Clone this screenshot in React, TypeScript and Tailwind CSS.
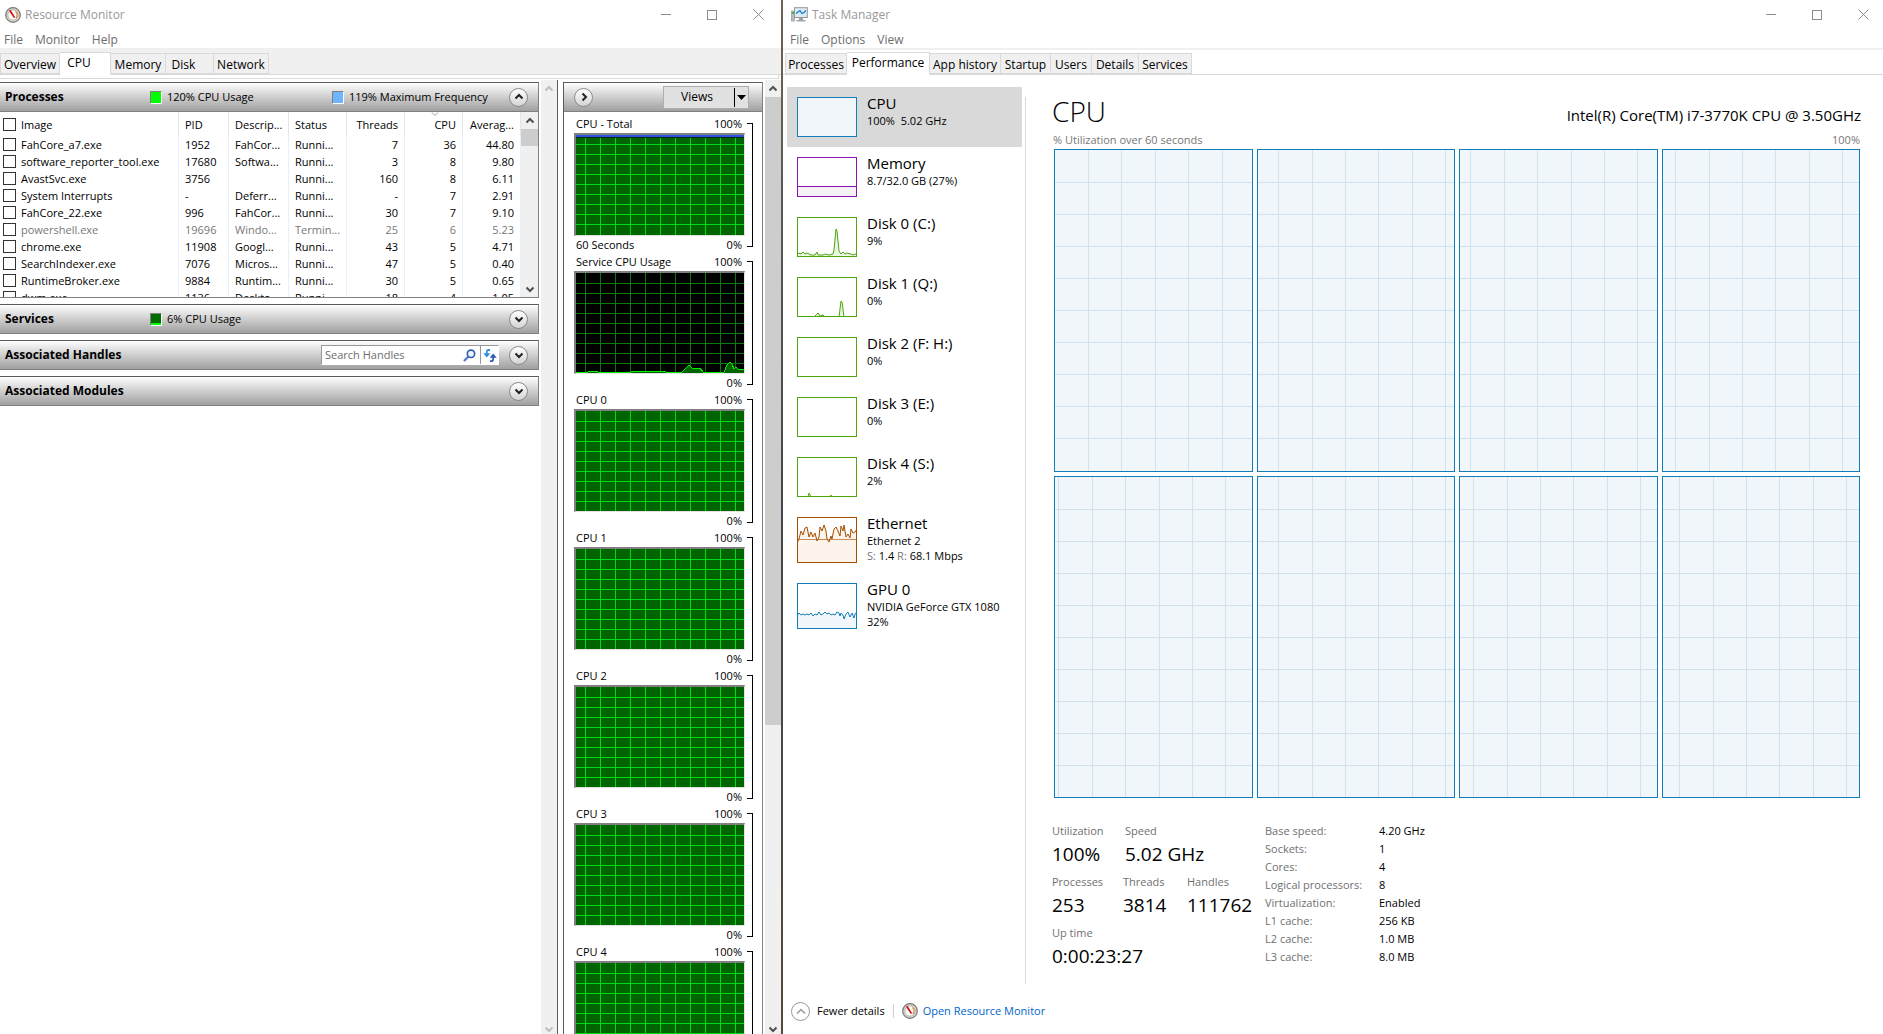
import { useState, type ReactNode } from 'react';
import clsx from 'clsx';

const PROCESSES = [
  { image: 'FahCore_a7.exe', pid: '1952', description: 'FahCor...', status: 'Runni...', threads: '7', cpu: '36', average: '44.80' },
  { image: 'software_reporter_tool.exe', pid: '17680', description: 'Softwa...', status: 'Runni...', threads: '3', cpu: '8', average: '9.80' },
  { image: 'AvastSvc.exe', pid: '3756', description: '', status: 'Runni...', threads: '160', cpu: '8', average: '6.11' },
  { image: 'System Interrupts', pid: '-', description: 'Deferr...', status: 'Runni...', threads: '-', cpu: '7', average: '2.91' },
  { image: 'FahCore_22.exe', pid: '996', description: 'FahCor...', status: 'Runni...', threads: '30', cpu: '7', average: '9.10' },
  { image: 'powershell.exe', pid: '19696', description: 'Windo...', status: 'Termin...', threads: '25', cpu: '6', average: '5.23', terminated: true },
  { image: 'chrome.exe', pid: '11908', description: 'Googl...', status: 'Runni...', threads: '43', cpu: '5', average: '4.71' },
  { image: 'SearchIndexer.exe', pid: '7076', description: 'Micros...', status: 'Runni...', threads: '47', cpu: '5', average: '0.40' },
  { image: 'RuntimeBroker.exe', pid: '9884', description: 'Runtim...', status: 'Runni...', threads: '30', cpu: '5', average: '0.65' },
  { image: 'dwm.exe', pid: '1136', description: 'Deskto...', status: 'Runni...', threads: '18', cpu: '4', average: '1.05' },
];

const GRAPHS = [
  { title: 'CPU - Total', kind: 'total', footer: '60 Seconds' },
  { title: 'Service CPU Usage', kind: 'service', footer: '' },
  { title: 'CPU 0', kind: 'core', footer: '' },
  { title: 'CPU 1', kind: 'core', footer: '' },
  { title: 'CPU 2', kind: 'core', footer: '' },
  { title: 'CPU 3', kind: 'core', footer: '' },
  { title: 'CPU 4', kind: 'core', footer: '' },
];

const SERVICE_LINE =
  '0,100 6,100 12,100 18,99 22,100 30,100 38,100 50,100 55,100 61,99 67,100 76,99 83,99 90,100 106,100 110,96 113,93 116,96 124,96 127,100 148,100 151,93 154,90 156,92 158,97 160,95 162,97 168,97';

const DEVICES = [
  { name: 'CPU', lines: ['100%  5.02 GHz'], color: '#117dbb', fill: '#f1f6fa', height: 40, points: '0,0 60,0' },
  { name: 'Memory', lines: ['8.7/32.0 GB (27%)'], color: '#8b12ae', fill: '#f4f2f4', height: 40, points: '0,29.5 60,29.5' },
  {
    name: 'Disk 0 (C:)',
    lines: ['9%'],
    color: '#4da60c',
    fill: '#eaf5e3',
    height: 40,
    points: '0,38 2,36 4,37 6,35 8,37 10,36 12,37 14,38 18,38 20,35 21,38 26,38 28,37 32,38 36,37 37,33 39,12 40,14 42,34 44,37 46,35 48,37 50,36 54,37 56,38 58,37 60,38',
  },
  {
    name: 'Disk 1 (Q:)',
    lines: ['0%'],
    color: '#4da60c',
    fill: '#eaf5e3',
    height: 40,
    points: '0,40 17,40 19,38 21,36 23,39 26,38 28,40 42,40 44,24 45,25 47,40 60,40',
  },
  { name: 'Disk 2 (F: H:)', lines: ['0%'], color: '#4da60c', fill: '#ffffff', height: 40, points: '' },
  { name: 'Disk 3 (E:)', lines: ['0%'], color: '#4da60c', fill: '#ffffff', height: 40, points: '' },
  { name: 'Disk 4 (S:)', lines: ['2%'], color: '#4da60c', fill: '#eaf5e3', height: 40, points: '0,40 11,40 12,36 14,40 33,40 34,38 35,40 60,40' },
  {
    name: 'Ethernet',
    lines: ['Ethernet 2'],
    color: '#a74f01',
    fill: '#fcf3eb',
    height: 46,
    baseline: 22,
    points:
      '0,26 2,22 4,14 6,18 8,11 10,10 12,20 14,15 16,20 18,16 20,24 22,20 23,10 25,14 27,8 29,14 30,22 32,25 34,19 35,22 37,12 39,10 41,14 43,19 44,9 46,14 47,8 49,20 51,17 53,21 54,12 56,16 58,15 60,12',
  },
  {
    name: 'GPU 0',
    lines: ['NVIDIA GeForce GTX 1080', '32%'],
    color: '#117dbb',
    fill: '#f1f6fa',
    height: 46,
    points:
      '0,33 2,30 4,32 6,31 8,32 10,31 12,32 14,30 16,33 18,31 20,32 22,29 24,32 26,31 28,29 30,31 32,30 34,32 36,31 38,32 40,29 42,30 43,33 44,30 46,32 47,36 49,31 51,29 53,34 55,30 57,35 58,31 60,29',
  },
];

// first vertical grid line of every logical processor, in percent of its width
const CORE_GRAPHS = [17, 10.5, 5.5, 6.5, 2, 10.5, 7, 8.5];

const DETAILS = [
  ['Base speed:', '4.20 GHz'],
  ['Sockets:', '1'],
  ['Cores:', '4'],
  ['Logical processors:', '8'],
  ['Virtualization:', 'Enabled'],
  ['L1 cache:', '256 KB'],
  ['L2 cache:', '1.0 MB'],
  ['L3 cache:', '8.0 MB'],
];

function MonitorIcon() {
  return (
    <svg width="16" height="16" viewBox="0 0 16 16" className="shrink-0">
      <circle cx="8" cy="8" r="7.3" fill="#d8d8d4" stroke="#77766f" strokeWidth="1.2" />
      <circle cx="8" cy="8" r="5.2" fill="#fbfbf8" stroke="#aaa89f" strokeWidth="0.8" />
      <path d="M10.5 4.5a4.4 4.4 0 0 1 .3 6.5" fill="none" stroke="#e08a4a" strokeWidth="1.3" />
      <path d="M3.8 3.5 5.8 3l4.400 7.300-1.400.8z" fill="#d01818" />
    </svg>
  );
}

function TaskIcon() {
  return (
    <svg width="17" height="15" viewBox="0 0 17 15" className="shrink-0">
      <rect x="0.5" y="4" width="3" height="10" fill="#b8bcc0" stroke="#8b8f93" strokeWidth="0.6" />
      <rect x="1" y="5" width="2" height="2" fill="#3cc13c" />
      <rect x="3.5" y="0.7" width="12.8" height="9.8" fill="#e8eaec" stroke="#8e969e" />
      <rect x="5" y="2" width="10" height="7" fill="#d5edfb" />
      <path d="M5 6.5 7 5l2-1.500 2 3L13 5.500l2-2" fill="none" stroke="#1a74b8" strokeWidth="1.2" />
      <path d="M8 11h4v2H8zM5.500 13h9v1.500h-9z" fill="#a0a4a8" />
    </svg>
  );
}

function Chevron({ direction, className }: { direction: 'up' | 'down' | 'right'; className?: string }) {
  const paths = { up: 'M1.500 6.500 5 3l3.500 3.500', down: 'M1.500 3.500 5 7l3.500-3.500', right: 'M3.500 1.500 7 5 3.500 8.500' };
  return (
    <svg width="10" height="10" viewBox="0 0 10 10" className={clsx('shrink-0', className)}>
      <path d={paths[direction]} fill="none" stroke="currentColor" strokeWidth="2" />
    </svg>
  );
}

function RoundButton({ direction, label, onClick }: { direction: 'up' | 'down' | 'right'; label: string; onClick?: () => void }) {
  return (
    <button
      type="button"
      aria-label={label}
      onClick={onClick}
      className="flex size-[19px] shrink-0 items-center justify-center rounded-full border border-[#8a8a8a] bg-linear-to-b from-white to-[#d4d4d4] text-[#222]"
    >
      <Chevron direction={direction} />
    </button>
  );
}

function TitleBar({ icon, title, className }: { icon: ReactNode; title: string; className?: string }) {
  return (
    <div className={clsx('flex h-[29px] shrink-0 items-center', className)}>
      {icon}
      <h1 className="ml-1 flex-1 text-xs text-[#999]">{title}</h1>
      <div className="flex h-full text-[#8c8c8c]">
        <button type="button" aria-label="Minimize" className="flex w-[46px] items-center justify-center">
          <svg width="11" height="11" shapeRendering="crispEdges">
            <path d="M0 5.500h10" stroke="currentColor" />
          </svg>
        </button>
        <button type="button" aria-label="Maximize" className="flex w-[46px] items-center justify-center">
          <svg width="10" height="10" shapeRendering="crispEdges">
            <rect x="0.5" y="0.5" width="9" height="9" fill="none" stroke="currentColor" />
          </svg>
        </button>
        <button type="button" aria-label="Close" className="flex w-[46px] items-center justify-center">
          <svg width="11" height="11">
            <path d="M0.500 0.500l10 10M10.500 0.500l-10 10" stroke="currentColor" />
          </svg>
        </button>
      </div>
    </div>
  );
}

function Menu({ items, className }: { items: string[]; className?: string }) {
  return (
    <nav className={clsx('flex h-[19px] shrink-0 items-center gap-3 pt-[2px] text-xs text-[#6d6d6d]', className)}>
      {items.map((item) => (
        <button key={item} type="button">
          {item}
        </button>
      ))}
    </nav>
  );
}

function Tab({ label, width, active }: { label: string; width: string; active?: boolean }) {
  return (
    <button
      type="button"
      role="tab"
      aria-selected={!!active}
      className={clsx(
        'shrink-0 border border-l-0 border-[#d9d9d9] text-xs whitespace-nowrap first:border-l',
        width,
        active ? '-mb-px h-[23px] border-b-white bg-white pb-[2px]' : 'h-[21px] bg-[#f0f0f0] pt-[2px]'
      )}
    >
      {label}
    </button>
  );
}

function ScrollBar({ thumb, muted, className }: { thumb?: string; muted?: boolean; className?: string }) {
  return (
    <div className={clsx('flex shrink-0 flex-col items-center bg-[#f0f0f0]', muted ? 'text-[#bfbfbf]' : 'text-[#505050]', className)}>
      <button type="button" aria-label="Scroll up" className="flex h-[17px] w-full items-center justify-center">
        <Chevron direction="up" />
      </button>
      <div className="flex min-h-0 w-full flex-1 flex-col">{thumb && <div className={clsx('w-full bg-[#cdcdcd]', thumb)} />}</div>
      <button type="button" aria-label="Scroll down" className="flex h-[17px] w-full items-center justify-center">
        <Chevron direction="down" />
      </button>
    </div>
  );
}

const HEADER = 'flex h-[30px] items-center border-y border-r border-t-[#5b5b5b] border-r-[#808080] border-b-[#808080] bg-linear-to-b from-white to-[#a0a0a0]';

function Section({ title, open, info, onToggle, children }: { title: string; open?: boolean; info?: ReactNode; onToggle?: () => void; children?: ReactNode }) {
  return (
    <section className="mb-[6px]">
      <header className={clsx(HEADER, 'pr-[10px] pl-[5px]')}>
        <h2 className="w-[145px] text-xs font-bold whitespace-nowrap">{title}</h2>
        <div className="flex flex-1 items-center">{info}</div>
        <RoundButton direction={open ? 'up' : 'down'} label={`Toggle ${title}`} onClick={onToggle} />
      </header>
      {children}
    </section>
  );
}

function Usage({ swatch, width, children }: { swatch: string; width: string; children: string }) {
  return (
    <span className={clsx('flex items-center gap-[5px] text-[11px] whitespace-nowrap', width)}>
      <span className={clsx('h-[13px] w-3 border border-[#808080] border-r-white border-b-white', swatch)} />
      {children}
    </span>
  );
}

function CheckBox({ label }: { label: string }) {
  return (
    <input
      type="checkbox"
      aria-label={label}
      className="block size-[13px] shrink-0 appearance-none border border-[#333] bg-white checked:bg-[#333]"
    />
  );
}

function ProcessTable() {
  const head = 'relative border-r border-[#e5e5e5] p-0 px-[6px] font-normal';
  const cell = 'border-r border-[#e6f1fb] p-0 px-[6px]';
  return (
    <div className="flex h-[186px] overflow-hidden border-r border-b border-[#808080]">
      <div className="min-w-0 flex-1 overflow-hidden">
        <table className="w-full table-fixed border-collapse text-[11px] leading-[17px] whitespace-nowrap">
          <colgroup>
            <col />
            <col className="w-[50px]" />
            <col className="w-[60px]" />
            <col className="w-[58px]" />
            <col className="w-[58px]" />
            <col className="w-[58px]" />
            <col className="w-[58px]" />
          </colgroup>
          <thead>
            <tr className="h-[24px] text-left">
              <th className="border-r border-[#e5e5e5] p-0 font-normal">
                <div className="flex items-center gap-[5px] pl-[3px]">
                  <CheckBox label="Select all" />
                  Image
                </div>
              </th>
              <th className={head}>PID</th>
              <th className={head}>Descrip...</th>
              <th className={head}>Status</th>
              <th className={clsx(head, 'text-right')}>Threads</th>
              <th className={clsx(head, 'text-right')}>
                <svg width="8" height="5" className="absolute top-0 left-[26px]">
                  <path d="M1 0.500 4 3.500 7 0.500" fill="none" stroke="#9a9a9a" />
                </svg>
                CPU
              </th>
              <th className={clsx(head, 'text-right')}>Averag...</th>
            </tr>
          </thead>
          <tbody>
            {PROCESSES.map((process) => (
              <tr key={process.pid} className={clsx('h-[17px]', process.terminated && 'text-[#777]')}>
                <td className="border-r border-[#e6f1fb] p-0">
                  <div className="flex items-center gap-[5px] pl-[3px]">
                    <CheckBox label={process.image} />
                    {process.image}
                  </div>
                </td>
                <td className={cell}>{process.pid}</td>
                <td className={cell}>{process.description}</td>
                <td className={cell}>{process.status}</td>
                <td className={clsx(cell, 'text-right')}>{process.threads}</td>
                <td className={clsx(cell, 'text-right')}>{process.cpu}</td>
                <td className={clsx(cell, 'text-right')}>{process.average}</td>
              </tr>
            ))}
          </tbody>
        </table>
      </div>
      <ScrollBar thumb="h-[17px]" className="w-[17px]" />
    </div>
  );
}

function HandleSearch() {
  const [query, setQuery] = useState('');
  return (
    <div className="mr-[10px] ml-auto flex h-5 w-[178px] items-center border border-[#999] border-r-white border-b-white bg-white">
      <input
        type="text"
        aria-label="Search Handles"
        placeholder="Search Handles"
        value={query}
        onChange={(e) => setQuery(e.target.value)}
        className="w-0 flex-1 pl-[3px] text-[11px] outline-none placeholder:text-[#6d6d6d]"
      />
      <button type="button" aria-label="Search" className="mr-1">
        <svg width="13" height="13" viewBox="0 0 13 13">
          <path d="M1 12 5.500 7.500" stroke="#5a7fc0" strokeWidth="2.4" />
          <circle cx="8" cy="4.8" r="3.7" fill="#eef5ff" stroke="#2f5fb3" strokeWidth="1.6" />
        </svg>
      </button>
      <button type="button" aria-label="Refresh" className="flex h-full w-[18px] items-center justify-center border-l border-[#999]">
        <svg width="14" height="13" viewBox="0 0 14 13">
          <path d="M7 1H5.500C4 1 3.800 2 3.800 3.500V5" fill="none" stroke="#2f8fe0" strokeWidth="1.8" />
          <path d="M0.300 4.300h7L3.800 8.500z" fill="#2f8fe0" />
          <path d="M7 12.200h1.500c1.500 0 1.700-1 1.700-2.500V8" fill="none" stroke="#2a5db0" strokeWidth="1.8" />
          <path d="M6.700 8.700h7L10.200 4.500z" fill="#2a5db0" />
        </svg>
      </button>
    </div>
  );
}

function ResourceGraph({ title, kind, footer }: { title: string; kind: string; footer: string }) {
  const isService = kind === 'service';
  const firstLine = kind === 'total' ? 9 : 10;
  return (
    <div className="flex h-[138px] shrink-0 pl-[10px] text-[11px]">
      <div className="w-[171px]">
        <div className="flex h-[18px] justify-between pr-[3px] pl-[2px] leading-[17px]">
          <span>{title}</span>
          <span>100%</span>
        </div>
        <div className="h-[103px] border border-t-2 border-l-2 border-[#808080] border-r-[#e3e3e3] border-b-[#e3e3e3]">
          <svg width="100%" height="100" shapeRendering="crispEdges" className={isService ? 'bg-black' : 'bg-[#006400]'}>
            {Array.from({ length: 9 }, (_, i) => (
              <line key={i} x1="0" x2="100%" y1={firstLine + i * 10 + 0.5} y2={firstLine + i * 10 + 0.5} stroke={isService ? '#0a7a0a' : '#00dc10'} />
            ))}
            {Array.from({ length: 11 }, (_, i) => (
              <line key={i} x1={9.5 + i * 15} x2={9.5 + i * 15} y1="0" y2="100%" stroke={isService ? '#0a7a0a' : '#00dc10'} />
            ))}
            {kind === 'total' && <rect x="0" y="0" width="100%" height="2" fill="#2b54e6" />}
            {kind === 'total' && <rect x="0" y="2" width="100%" height="1" fill="#002a10" />}
            {isService && <polygon points={`0,101 ${SERVICE_LINE} 168,101`} fill="#006400" transform="translate(0 -1)" />}
            {isService && <polyline points={SERVICE_LINE} fill="none" stroke="#00f000" transform="translate(0 -1)" />}
          </svg>
        </div>
        <div className="flex justify-between pr-[3px] pl-[2px] leading-[17px]">
          <span>{footer}</span>
          <span>0%</span>
        </div>
      </div>
      <div className="mt-2 ml-[2px] h-[124px] w-[6px] border border-l-0 border-black" />
    </div>
  );
}

function ResourceMonitor() {
  const [open, setOpen] = useState(true);
  return (
    <main className="flex min-w-0 flex-col overflow-hidden bg-white">
      <TitleBar icon={<MonitorIcon />} title="Resource Monitor" className="pl-[5px]" />
      <Menu items={['File', 'Monitor', 'Help']} className="pl-1" />
      <div role="tablist" className="flex h-[27px] shrink-0 items-end border-b border-[#d9d9d9] bg-[#f0f0f0]">
        <Tab label="Overview" width="w-[60px]" />
        <Tab label="CPU" width="w-[51px] pr-3" active />
        <Tab label="Memory" width="w-[55px]" />
        <Tab label="Disk" width="w-[48px] pr-3" />
        <Tab label="Network" width="w-[55px]" />
      </div>
      <div className="mr-[2px] h-1 shrink-0 border-r border-b border-[#d9d9d9]" />

      <div className="flex min-h-0 flex-1 pt-px">
        <div className="min-w-0 flex-1 pt-[2px]">
          <Section
            title="Processes"
            open={open}
            onToggle={() => setOpen(!open)}
            info={
              <>
                <Usage swatch="bg-[#00ff00]" width="w-[182px]">
                  120% CPU Usage
                </Usage>
                <Usage swatch="bg-[#6eb4ff]" width="w-[170px]">
                  119% Maximum Frequency
                </Usage>
              </>
            }
          >
            {open && <ProcessTable />}
          </Section>
          <Section
            title="Services"
            info={
              <Usage swatch="bg-linear-to-b from-[#006c00] from-80% to-[#00ff00] to-80%" width="w-[182px]">
                6% CPU Usage
              </Usage>
            }
          />
          <Section title="Associated Handles" info={<HandleSearch />} />
          <Section title="Associated Modules" />
        </div>
        <ScrollBar muted className="-mb-[3px] ml-[2px] w-4" />

        <div className="flex w-[224px] shrink-0 border-l border-[#5b5b5b] bg-white pl-[5px]">
          <div className="mt-[2px] flex w-[200px] flex-col overflow-hidden border-x border-l-[#5b5b5b] border-r-[#808080]">
            <div className={clsx(HEADER, 'shrink-0 border-r-0 pl-[10px]')}>
              <RoundButton direction="right" label="Hide graphs" />
              <div className="mr-[13px] ml-auto flex h-[23px] w-[86px] items-center border border-[#adadad] bg-[#e1e1e1] text-xs">
                <button type="button" className="flex-1 pr-1">
                  Views
                </button>
                <button type="button" aria-label="Choose view size" className="flex h-[19px] w-[14px] items-center justify-center border-l border-black">
                  <svg width="9" height="5">
                    <path d="M0 0h9L4.500 5z" />
                  </svg>
                </button>
              </div>
            </div>
            <div className="flex min-h-0 flex-1 flex-col overflow-hidden pt-[3px]">
              {GRAPHS.map((graph) => (
                <ResourceGraph key={graph.title} {...graph} />
              ))}
            </div>
          </div>
          <ScrollBar thumb="h-[68%]" className="-mb-[3px] ml-[2px] w-4" />
        </div>
      </div>
    </main>
  );
}

type Device = (typeof DEVICES)[number];

function Thumbnail({ device }: { device: Device }) {
  const { color, fill, height, points, baseline } = device as Device & { baseline?: number };
  return (
    <svg width="60" height={height} className="shrink-0 bg-white">
      {points && <polygon points={`0,${height} ${points} 60,${height}`} fill={fill} />}
      {baseline && <line x1="0" x2="60" y1={baseline + 0.5} y2={baseline + 0.5} stroke={color} strokeOpacity="0.6" />}
      {points && <polyline points={points} fill="none" stroke={color} />}
      <rect x="0.5" y="0.5" width="59" height={height - 1} fill="none" stroke={color} />
    </svg>
  );
}

function Sidebar() {
  const [selected, setSelected] = useState('CPU');
  return (
    <aside className="w-[235px] shrink-0 pt-3">
      {DEVICES.map((device) => (
        <button
          key={device.name}
          type="button"
          onClick={() => setSelected(device.name)}
          className={clsx('flex w-full gap-[10px] p-[10px] text-left', selected === device.name && 'bg-[#d9d9d9]')}
        >
          <Thumbnail device={device} />
          <div className="-mt-1 h-0 whitespace-nowrap">
            <div className="text-[15px] leading-5">{device.name}</div>
            {device.lines.map((line) => (
              <div key={line} className="text-[11px] leading-[15px] whitespace-pre">
                {line}
              </div>
            ))}
            {device.name === 'Ethernet' && (
              <div className="text-[11px] leading-[15px]">
                <span className="text-[#777]">S:</span> 1.4 <span className="text-[#777]">R:</span> 68.1 Mbps
              </div>
            )}
          </div>
        </button>
      ))}
    </aside>
  );
}

function CoreGraph({ offset }: { offset: number }) {
  return (
    <div className="border border-[#117dbb] bg-[#f1f6fa]">
      <svg width="100%" height="100%" shapeRendering="crispEdges" className="block">
        {Array.from({ length: 9 }, (_, i) => (
          <line key={i} x1="0" x2="100%" y1={`${(i + 1) * 10}%`} y2={`${(i + 1) * 10}%`} stroke="#cee3ef" />
        ))}
        {Array.from({ length: 6 }, (_, i) => (
          <line key={i} x1={`${offset + i * 17}%`} x2={`${offset + i * 17}%`} y1="0" y2="100%" stroke="#cee3ef" />
        ))}
      </svg>
    </div>
  );
}

function Stat({ label, value, width }: { label: string; value: string; width?: string }) {
  return (
    <div className={clsx('h-[51px] whitespace-nowrap', width)}>
      <dt className="text-[11px] leading-[18px] text-[#707070]">{label}</dt>
      <dd className="text-[19px] leading-[28px]">{value}</dd>
    </div>
  );
}

function TaskManager() {
  return (
    <main className="flex min-w-0 flex-col overflow-hidden bg-white">
      <TitleBar icon={<TaskIcon />} title="Task Manager" className="-mr-[3px] pl-2" />
      <Menu items={['File', 'Options', 'View']} className="pl-[7px]" />
      <div role="tablist" className="flex h-[27px] shrink-0 items-end border-t-2 border-b border-t-[#f0f0f0] border-b-[#d9d9d9] pl-[2px]">
        <Tab label="Processes" width="w-[62px]" />
        <Tab label="Performance" width="w-[83px]" active />
        <Tab label="App history" width="w-[71px]" />
        <Tab label="Startup" width="w-[50px]" />
        <Tab label="Users" width="w-[41px]" />
        <Tab label="Details" width="w-[47px]" />
        <Tab label="Services" width="w-[53px]" />
      </div>

      <div className="flex min-h-0 flex-1 pl-1">
        <Sidebar />
        <section className="mt-[22px] ml-[3px] flex min-w-0 flex-1 flex-col border-l border-[#d9d9d9] pr-[22px] pl-[26px]">
          <div className="flex h-[34px] items-start justify-between">
            <h2 className="text-[28px] leading-7 font-light">CPU</h2>
            <span className="text-[15px] leading-9">Intel(R) Core(TM) i7-3770K CPU @ 3.50GHz</span>
          </div>
          <div className="flex h-[18px] items-center justify-between pr-px text-[11px] text-[#777]">
            <span className="pl-px">% Utilization over 60 seconds</span>
            <span>100%</span>
          </div>
          <div className="mr-px ml-[2px] grid min-h-0 flex-1 grid-cols-4 grid-rows-2 gap-1">
            {CORE_GRAPHS.map((offset, i) => (
              <CoreGraph key={i} offset={offset} />
            ))}
          </div>
          <div className="mt-6 flex h-[162px]">
            <dl className="w-[213px]">
              <div className="flex">
                <Stat label="Utilization" value="100%" width="w-[73px]" />
                <Stat label="Speed" value="5.02 GHz" />
              </div>
              <div className="flex">
                <Stat label="Processes" value="253" width="w-[71px]" />
                <Stat label="Threads" value="3814" width="w-[64px]" />
                <Stat label="Handles" value="111762" />
              </div>
              <Stat label="Up time" value="0:00:23:27" />
            </dl>
            <dl className="grid auto-rows-[18px] grid-cols-[114px_auto] text-[11px] leading-[18px]">
              {DETAILS.map(([label, value]) => (
                <div key={label} className="contents">
                  <dt className="text-[#707070]">{label}</dt>
                  <dd>{value}</dd>
                </div>
              ))}
            </dl>
          </div>
        </section>
      </div>

      <footer className="flex h-[50px] shrink-0 items-center pt-1 pl-2 text-[11px]">
        <button type="button" className="flex items-center gap-[7px]">
          <span className="flex size-[19px] items-center justify-center rounded-full border border-[#999]">
            <svg width="10" height="6">
              <path d="M1 5.500 5 1.500 9 5.500" fill="none" stroke="#999" strokeWidth="1.5" />
            </svg>
          </span>
          Fewer details
        </button>
        <span className="mx-2 h-[14px] w-px bg-[#d0d0d0]" />
        <a href="#" className="flex items-center gap-[5px] text-[#0066cc]">
          <MonitorIcon />
          Open Resource Monitor
        </a>
      </footer>
    </main>
  );
}

export default function App() {
  return (
    <div className="grid h-screen grid-cols-[minmax(0,781fr)_2px_minmax(0,1100fr)] overflow-hidden bg-white font-['Open_Sans','Noto_Sans',sans-serif] text-black">
      <ResourceMonitor />
      <div className="bg-linear-to-b from-[#6e6254] via-[#3f464d] to-[#57493a]" />
      <TaskManager />
    </div>
  );
}
